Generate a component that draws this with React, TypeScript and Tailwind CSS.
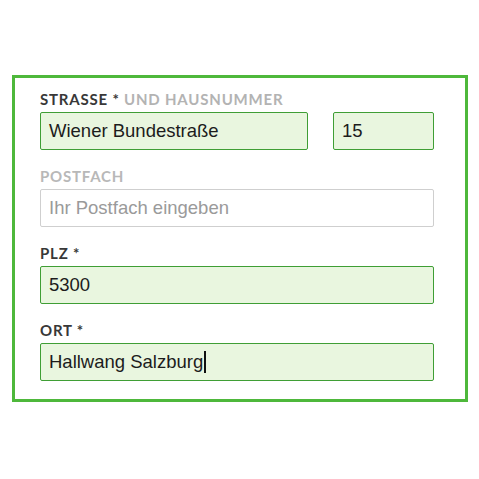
import React from "react";

const inputCls =
  "h-[38px] rounded-[2px] border border-[#3f9e35] bg-[#e9f6df] pl-[8px] flex items-center text-[18.5px] text-[#1c1c1c] [font-family:'Liberation_Sans',Arial,sans-serif]";

function Label({ children }: { children: React.ReactNode }) {
  return (
    <div className="h-[17px] leading-[17px] mb-[4px] text-[15px] tracking-[0.8px] font-bold uppercase text-[#383838] [font-family:Lato,sans-serif] whitespace-nowrap">
      {children}
    </div>
  );
}

export default function App() {
  return (
    <div className="min-h-[479px] w-[479px] bg-white pt-[75px] pl-[12px]">
      <div className="w-[456px] h-[327px] border-[3px] border-[#4eb83b] pt-[13px] pl-[25px] pr-[31px]">
        <div className="mb-[18px]">
          <Label>
            Strasse <span className="text-[#383838]">*</span>{" "}
            <span className="text-[#b3b3b3]">und Hausnummer</span>
          </Label>
          <div className="flex gap-[25px]">
            <div className={inputCls + " w-[268px]"}>Wiener Bundestraße</div>
            <div className={inputCls + " w-[101px]"}>15</div>
          </div>
        </div>
        <div className="mb-[18px]">
          <Label>
            <span className="text-[#b8b8b8]">Postfach</span>
          </Label>
          <div className="h-[38px] rounded-[2px] border border-[#cfcfcf] bg-white pl-[8px] flex items-center text-[18.5px] text-[#9a9a9a] [font-family:'Liberation_Sans',Arial,sans-serif]">
            Ihr Postfach eingeben
          </div>
        </div>
        <div className="mb-[18px]">
          <Label>PLZ *</Label>
          <div className={inputCls}>5300</div>
        </div>
        <div>
          <Label>Ort *</Label>
          <div className={inputCls}>
            Hallwang Salzburg
            <span className="inline-block w-[1.5px] h-[22px] bg-[#111] ml-[1px]" />
          </div>
        </div>
      </div>
    </div>
  );
}
